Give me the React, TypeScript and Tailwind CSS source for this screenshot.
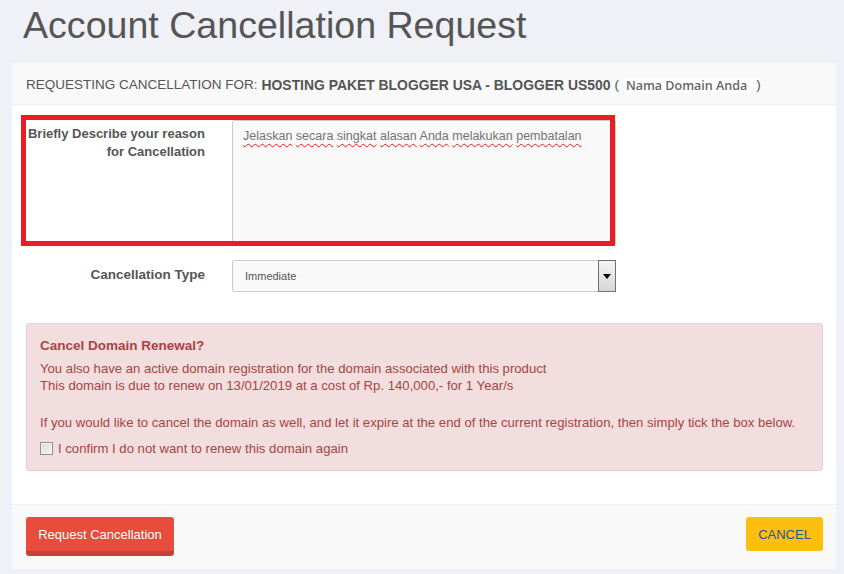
import React from "react";

const reasonWords = "Jelaskan secara singkat alasan Anda melakukan pembatalan".split(" ");

const App = () => {
  return (
    <div className="min-h-[574px] bg-[#eff1f6] font-['Liberation_Sans',Arial,sans-serif] text-[#555] pb-[5px]">
      <h1 className="pl-[23px] pt-[7px] mb-[19px] text-[37.6px] leading-[37px] text-[#555]">
        Account Cancellation Request
      </h1>

      <div className="ml-[12px] w-[824px] bg-white rounded-[3px] overflow-hidden">
        {/* header */}
        <div className="h-[42px] bg-[#f9f9f9] border-b border-[#eeeeee] flex items-center px-[14px] pt-[3px] text-[13.5px] text-[#555] whitespace-nowrap">
          <span>REQUESTING CANCELLATION FOR:</span>
          <span className="font-bold text-[13.9px] ml-[4px]">HOSTING PAKET BLOGGER USA - BLOGGER US500</span>
          <span className="ml-[4px]">(</span>
          <span className="ml-[5px] bg-white pl-[2px] pr-[9px] font-['Open_Sans',sans-serif] font-semibold text-[12.5px] leading-[15px] text-[#666]">
            Nama Domain Anda
          </span>
          <span>)</span>
        </div>

        {/* body */}
        <div className="px-[14px] pt-[15px] pb-[33px]">
          <div className="relative flex">
            <label className="w-[179px] text-right font-bold text-[13px] leading-[18px] pt-[5px] text-[#555]">
              Briefly Describe your reason for Cancellation
            </label>
            <div className="ml-[27px] w-[384px] h-[125px] bg-[#f9f9f9] border border-[#cccccc] rounded-[2px] px-[10px] pt-[6px] text-[12.5px] leading-[18px] text-[#737373]">
              {reasonWords.map((w, i) => (
                <React.Fragment key={i}>
                  <span className="underline decoration-wavy decoration-[#e21b1b] decoration-1 underline-offset-[3px]">
                    {w}
                  </span>
                  {i < reasonWords.length - 1 ? " " : ""}
                </React.Fragment>
              ))}
            </div>
            {/* red highlight frame */}
            <div className="absolute left-[-5px] top-[-5px] w-[594px] h-[131px] border-[5px] border-[#ed1c24] pointer-events-none" />
          </div>

          <div className="mt-[15px] flex items-center">
            <label className="w-[179px] text-right font-bold text-[13.5px] leading-[18px] -mt-[2px] text-[#555]">
              Cancellation Type
            </label>
            <div className="ml-[27px] w-[384px] h-[32px] bg-[#f9f9f9] border border-[#cccccc] rounded-[2px] flex items-stretch">
              <span className="flex-1 pl-[12px] flex items-center text-[11px] text-[#555]">Immediate</span>
              <div className="w-[18px] -my-px -mr-px border border-[#707070] bg-gradient-to-b from-[#f4f4f4] to-[#d6d6d6] flex items-center justify-center">
                <svg width="8" height="5" viewBox="0 0 8 5">
                  <path d="M0 0h8L4 5z" fill="#000" />
                </svg>
              </div>
            </div>
          </div>

          <div className="mt-[31px] w-[797px] border border-[#ebccd1] bg-[#f2dede] text-[#a94442] rounded-[3px] pl-[13px] pr-[13px] pt-[13px] pb-[13px] text-[13.15px]">
            <h4 className="font-bold text-[13.5px] leading-[18px]">Cancel Domain Renewal?</h4>
            <p className="mt-[5px] leading-[17px]">
              You also have an active domain registration for the domain associated with this product
              <br />
              This domain is due to renew on 13/01/2019 at a cost of Rp. 140,000,- for 1 Year/s
            </p>
            <p className="mt-[20px] leading-[17px]">
              If you would like to cancel the domain as well, and let it expire at the end of the current registration, then simply tick the box below.
            </p>
            <label className="mt-[9px] flex items-center leading-[17px]">
              <span className="w-[13px] h-[13px] border border-[#8f8f8f] bg-gradient-to-br from-[#d8d8d8] to-[#f6f6f6] shadow-[inset_0_0_0_1px_#f4f4f4]" />
              <span className="ml-[5px]">I confirm I do not want to renew this domain again</span>
            </label>
          </div>
        </div>

        {/* footer */}
        <div className="h-[65px] bg-[#f9f9f9] border-t border-[#eeeeee] flex items-start justify-between pl-[14px] pr-[13px] pt-[12px]">
          <button className="w-[148px] h-[39px] bg-[#e74c3c] border-b-[5px] border-[#c9403a] rounded-[3px] text-white text-[13px] leading-none">
            Request Cancellation
          </button>
          <button className="w-[77px] h-[34px] bg-[#fdbf0f] rounded-[3px] text-[#27559c] text-[13px] leading-none">
            CANCEL
          </button>
        </div>
      </div>
    </div>
  );
};

export default App;
